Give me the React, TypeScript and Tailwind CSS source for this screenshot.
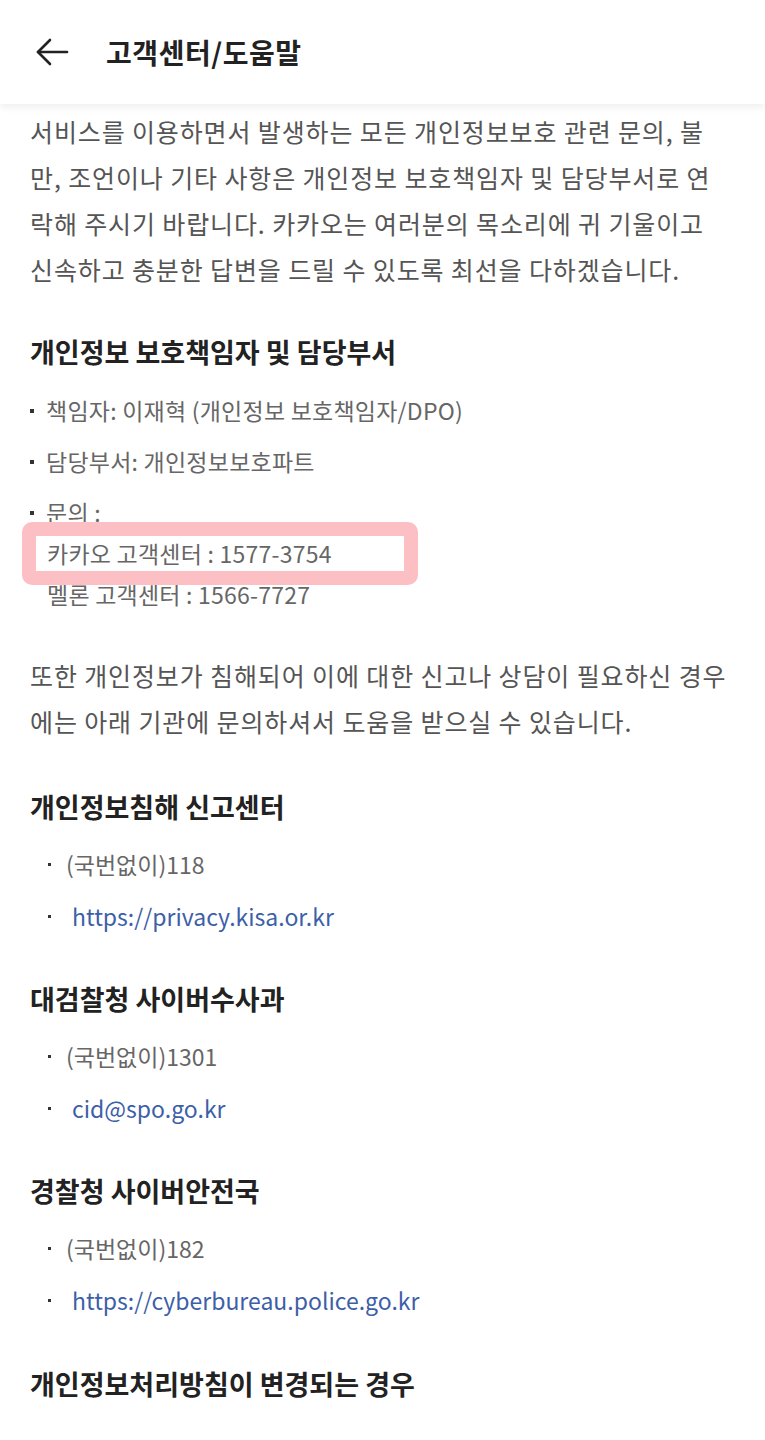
import React from 'react';

const font = { fontFamily: '"Noto Sans CJK KR", "Noto Sans", sans-serif' };

const agencies = [
  { title: '개인정보침해 신고센터', tel: '(국번없이)118', link: 'https://privacy.kisa.or.kr' },
  { title: '대검찰청 사이버수사과', tel: '(국번없이)1301', link: 'cid@spo.go.kr' },
  { title: '경찰청 사이버안전국', tel: '(국번없이)182', link: 'https://cyberbureau.police.go.kr' },
];

const intro = [
  '서비스를 이용하면서 발생하는 모든 개인정보보호 관련 문의, 불',
  '만, 조언이나 기타 사항은 개인정보 보호책임자 및 담당부서로 연',
  '락해 주시기 바랍니다. 카카오는 여러분의 목소리에 귀 기울이고',
  '신속하고 충분한 답변을 드릴 수 있도록 최선을 다하겠습니다.',
];

const notice = [
  '또한 개인정보가 침해되어 이에 대한 신고나 상담이 필요하신 경우',
  '에는 아래 기관에 문의하셔서 도움을 받으실 수 있습니다.',
];

function Square() {
  return <span className="h-[4px] w-[4px] shrink-0 bg-[#333]" aria-hidden="true" />;
}

function Lines({ lines }: { lines: string[] }) {
  return (
    <>
      {lines.map((l, i) => (
        <span key={i} className="block whitespace-nowrap">
          {l}
        </span>
      ))}
    </>
  );
}

export default function App() {
  return (
    <div className="min-h-[1440px] w-[765px] overflow-hidden bg-white" style={font}>
      <header className="relative z-10 flex h-[104px] items-center bg-white shadow-[0_3px_8px_rgba(0,0,0,0.07)]">
        <button className="ml-[34px] flex h-[36px] w-[36px] items-center justify-center text-[#222]">
          <svg width="34" height="30" viewBox="0 0 34 30" fill="none" stroke="currentColor" strokeWidth="2.6" strokeLinecap="round" strokeLinejoin="round">
            <path d="M32 15H3" />
            <path d="M15 3L3 15l12 12" />
          </svg>
        </button>
        <h1 className="ml-[36px] text-[28px] font-bold tracking-[0.02em] text-[#222]">고객센터/도움말</h1>
      </header>

      <main className="px-[30px] pt-[4px] text-[#555]">
        <p className="text-[25px] leading-[46px] tracking-[0.035em]">
          <Lines lines={intro} />
        </p>

        <h2 className="mt-[37px] text-[27px] font-bold leading-[46px] text-[#222]">
          개인정보 보호책임자 및 담당부서
        </h2>
        <ul className="mt-[15px] flex flex-col gap-[10px] text-[23px] leading-[41px] tracking-[0.01em] text-[#666]">
          <li className="flex items-center gap-[12px]">
            <Square />
            <span>책임자: 이재혁 (개인정보 보호책임자/DPO)</span>
          </li>
          <li className="flex items-center gap-[12px]">
            <Square />
            <span>담당부서: 개인정보보호파트</span>
          </li>
          <li>
            <div className="flex items-center gap-[12px]">
              <Square />
              <span>문의 :</span>
            </div>
            <div className="relative pl-[17px]">
              <span
                className="absolute left-[-8px] top-[-11px] h-[63px] w-[396px] rounded-[10px] border-[14px] border-[#fcbfc3]"
                aria-hidden="true"
              />
              카카오 고객센터 : 1577-3754
            </div>
            <div className="pl-[17px]">멜론 고객센터 : 1566-7727</div>
          </li>
        </ul>

        <p className="mt-[37px] text-[25px] leading-[46px] tracking-[0.035em]">
          <Lines lines={notice} />
        </p>

        {agencies.map((a, i) => (
          <section key={i} className={i === 0 ? 'mt-[40px]' : 'mt-[39px]'}>
            <h2 className="text-[27px] font-bold leading-[46px] text-[#222]">{a.title}</h2>
            <ul className="mt-[14px] flex flex-col gap-[11px] text-[23px] leading-[41px]">
              <li className="flex items-center">
                <span className="ml-[18px] h-[3px] w-[3px] shrink-0 bg-[#333]" aria-hidden="true" />
                <span className="ml-[15px] text-[#666]">{a.tel}</span>
              </li>
              <li className="flex items-center">
                <span className="ml-[18px] h-[3px] w-[3px] shrink-0 bg-[#333]" aria-hidden="true" />
                <a className="ml-[21px] text-[#3d5fa8]">{a.link}</a>
              </li>
            </ul>
          </section>
        ))}

        <h2 className="mt-[40px] text-[27px] font-bold leading-[46px] text-[#222]">
          개인정보처리방침이 변경되는 경우
        </h2>
      </main>
    </div>
  );
}
